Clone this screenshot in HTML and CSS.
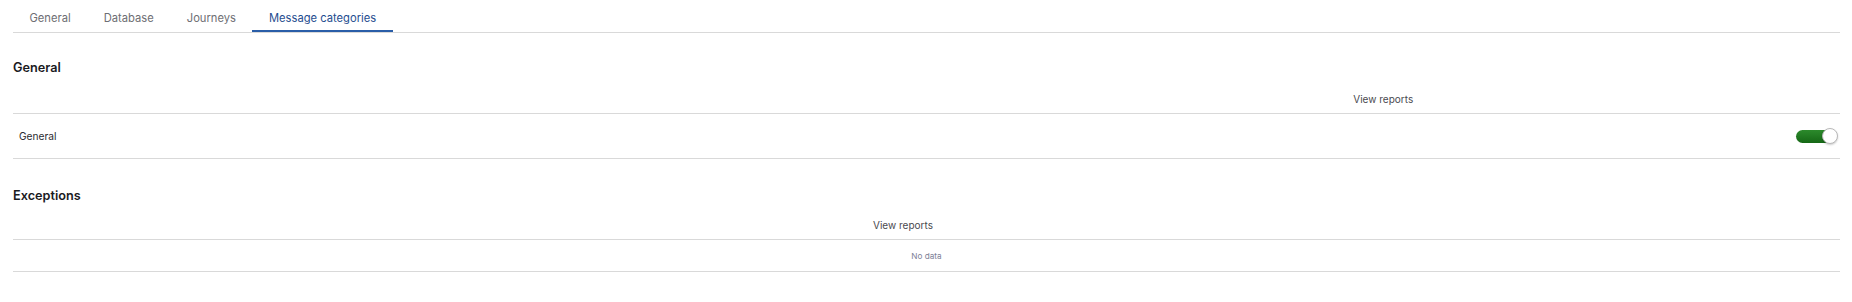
FILE: index.html
```html
<!DOCTYPE html>
<html lang="en">
<head>
  <meta charset="UTF-8" />
  <meta name="viewport" content="width=device-width, initial-scale=1" />
  <title>Message categories</title>
  <link rel="stylesheet" href="styles.css">
</head>
<body>
  <nav class="tabs">
    <a class="tab">General</a>
    <a class="tab">Database</a>
    <a class="tab">Journeys</a>
    <a class="tab active">Message categories</a>
  </nav>

  <section class="group">
    <h2>General</h2>
    <div class="table cols-2">
      <div class="head"></div>
      <div class="head center">View reports</div>
      <div class="cell name">General</div>
      <div class="cell right">
        <span class="toggle on"><span class="knob"></span></span>
      </div>
    </div>
  </section>

  <section class="group">
    <h2>Exceptions</h2>
    <div class="table cols-1">
      <div class="head center">View reports</div>
      <div class="cell empty">No data</div>
    </div>
  </section>
</body>
</html>
```

FILE: styles.css
```css
* {
  box-sizing: border-box;
}
body {
  font-family: Inter, "Noto Sans", sans-serif;
  margin: 0;
  padding: 0 12px 0 13px;
  background-color: #fff;
  color: #1b1b1f;
}
.tabs {
  display: flex;
  height: 33px;
  border-bottom: 1px solid #d9d9d9;
}
.tab {
  padding: 4px 16.5px 0;
  font-size: 11.2px;
  line-height: 28px;
  color: #6e6e73;
  cursor: pointer;
}
.tab.active {
  color: #1f4d8f;
  box-shadow: inset 0 -2px 0 #2a5ea8;
}
.group h2 {
  margin: 0;
  padding-top: 25px;
  height: 46px;
  font-size: 12.7px;
  font-weight: 600;
  line-height: 20px;
}
.group + .group h2 {
  padding-top: 27px;
}
.table {
  display: grid;
}
.cols-2 {
  grid-template-columns: 1fr 1fr;
}
.cols-1 {
  grid-template-columns: 1fr;
}
.head {
  height: 35px;
  padding-top: 14px;
  font-size: 10px;
  line-height: 12px;
  color: #4a4a50;
  border-bottom: 1px solid #d9d9d9;
}
.cols-1 .head {
  padding-right: 47px;
}
.center {
  text-align: center;
}
.cell {
  height: 45px;
  display: flex;
  align-items: center;
  border-bottom: 1px solid #d9d9d9;
  font-size: 10.2px;
}
.cell.name {
  padding-left: 6px;
  color: #2b2b30;
}
.cell.right {
  justify-content: flex-end;
  padding-right: 4px;
}
.cell.empty {
  justify-content: center;
  height: 32px;
  font-size: 8.2px;
  color: #7d8196;
}
.toggle {
  position: relative;
  display: inline-block;
  width: 40px;
  height: 13px;
  border-radius: 7px;
  background: #d0d0d0;
}
.toggle.on {
  background: linear-gradient(#2c8a2c, #166816);
}
.toggle .knob {
  position: absolute;
  right: -2px;
  top: -2px;
  width: 16px;
  height: 16px;
  border-radius: 50%;
  background: #fff;
  border: 1px solid #b9b9b9;
  box-shadow: 0 1px 2px rgba(0, 0, 0, 0.2);
}
```
